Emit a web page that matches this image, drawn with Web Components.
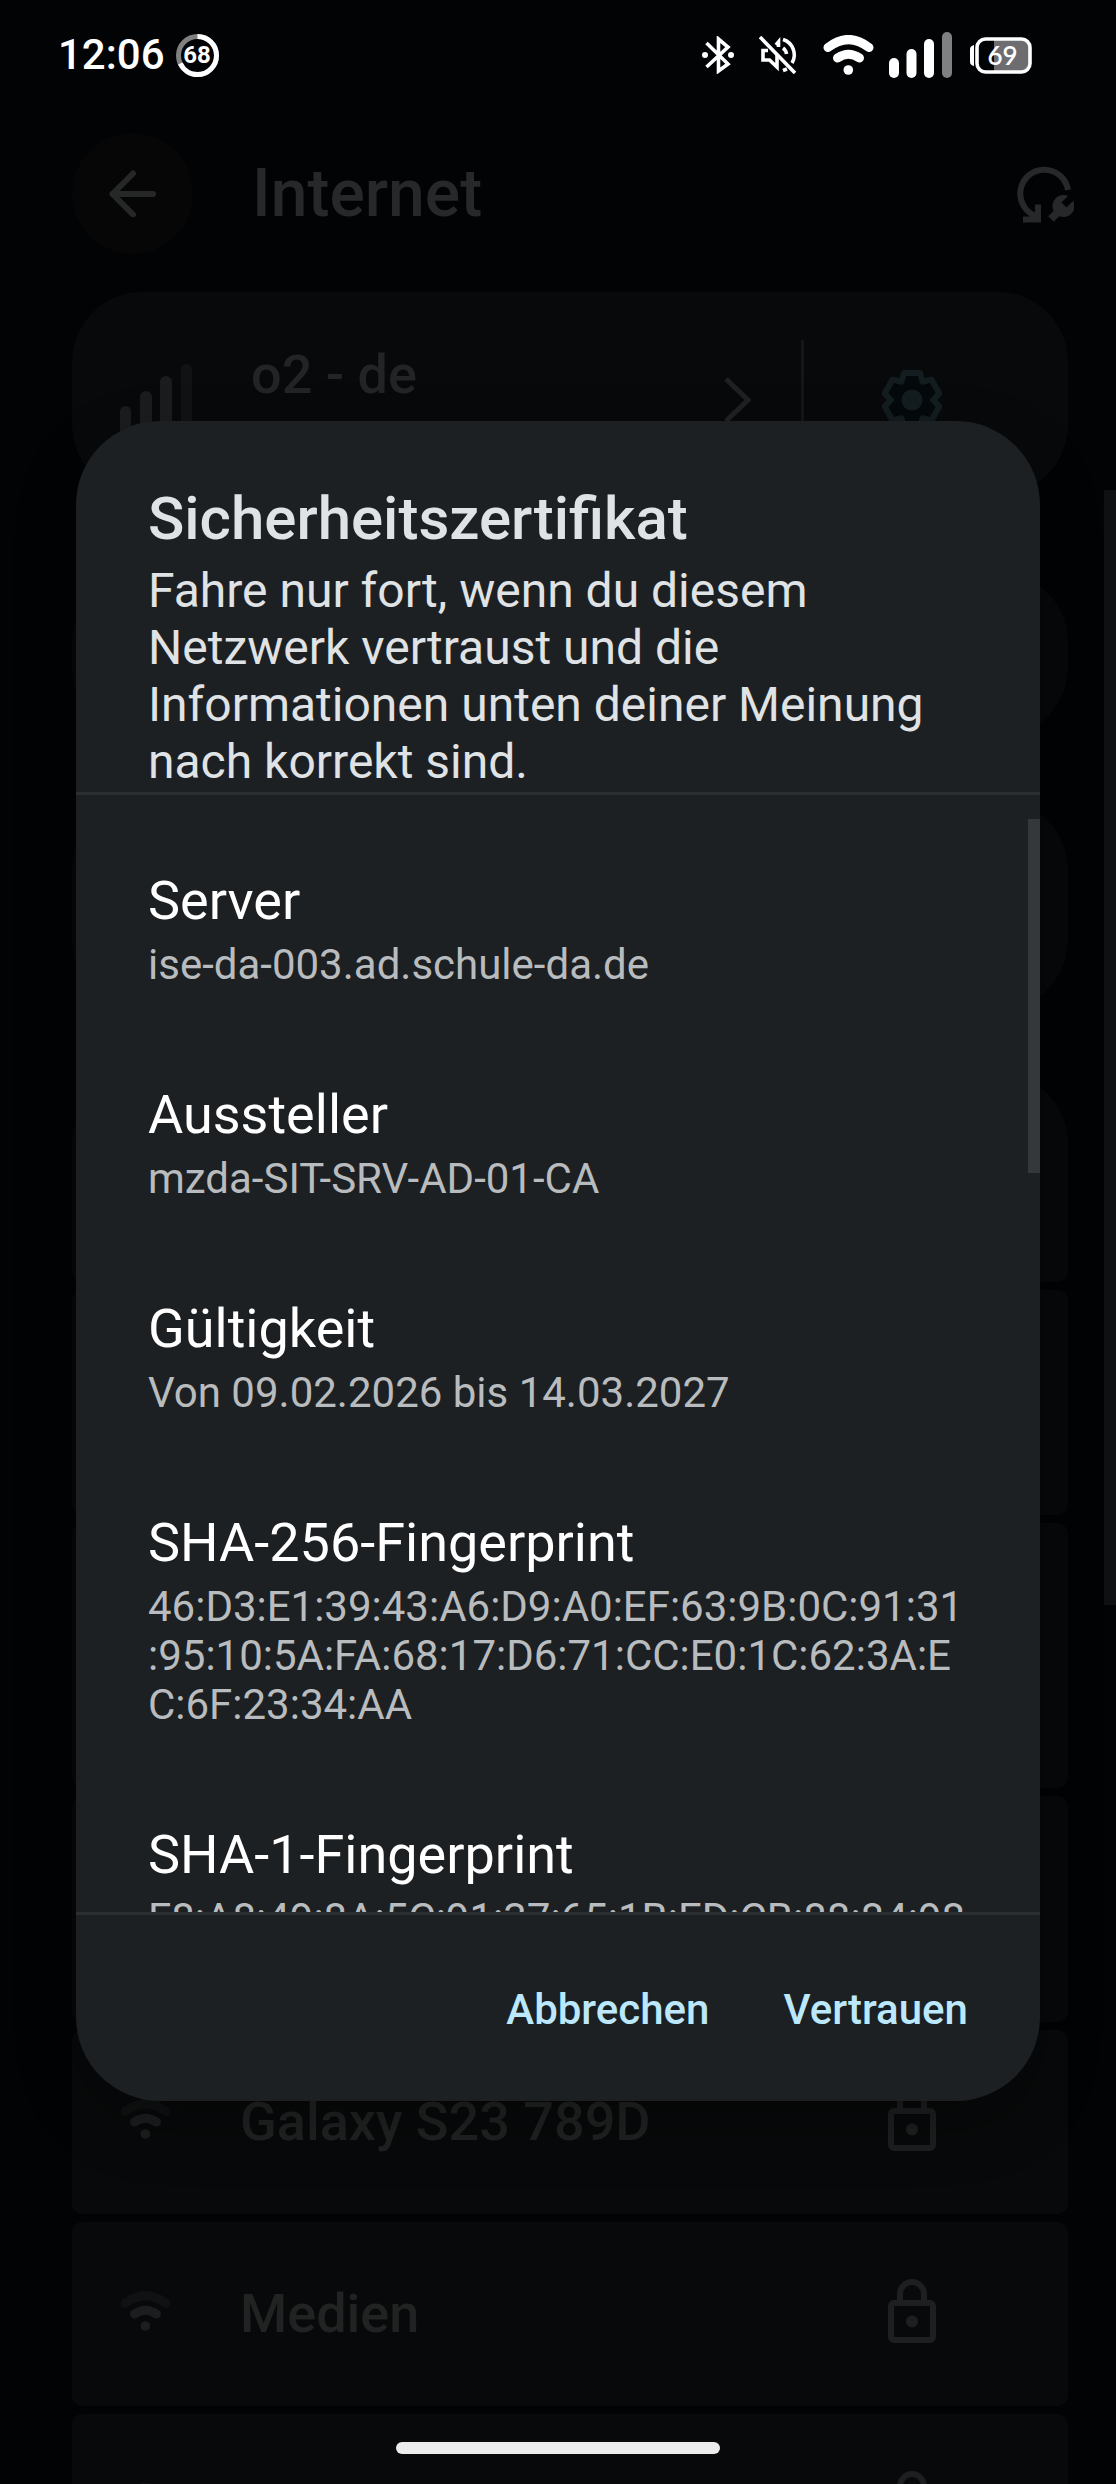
<!DOCTYPE html>
<html lang="de">
<head>
<meta charset="utf-8">
<meta name="viewport" content="width=device-width, initial-scale=1">
<title>Internet</title>
<style>
  html, body { margin: 0; height: 100%; background: #020305; }
  body { font-family: Roboto, "Noto Sans", sans-serif; color: #fff; overflow: hidden; }
</style>
</head>
<body>
<phone-screen>
  <status-bar slot="status" time="12:06" ring="68" battery="69"></status-bar>
  <settings-page heading="Internet">
    <carrier-card name="o2 - de"></carrier-card>
    <list-group style="--h:165px"><list-card></list-card></list-group>
    <list-group style="--h:210px"><list-card></list-card></list-group>
    <list-group>
      <list-card style="--h:209px"></list-card>
      <list-card style="--h:225px"></list-card>
      <list-card style="--h:265px"></list-card>
      <list-card style="--h:226px"></list-card>
      <wifi-row>Galaxy S23 789D</wifi-row>
      <wifi-row>Medien</wifi-row>
      <wifi-row></wifi-row>
    </list-group>
  </settings-page>
  <cert-dialog slot="dialog">
    <span slot="title">Sicherheitszertifikat</span>
    <span slot="text">Fahre nur fort, wenn du diesem Netzwerk vertraust und die Informationen unten deiner Meinung nach korrekt sind.</span>
    <cert-field label="Server">ise-da-003.ad.schule-da.de</cert-field>
    <cert-field label="Aussteller">mzda-SIT-SRV-AD-01-CA</cert-field>
    <cert-field label="Gültigkeit">Von 09.02.2026 bis 14.03.2027</cert-field>
    <cert-field label="SHA-256-Fingerprint">46:D3:E1:39:43:A6:D9:A0:EF:63:9B:0C:91:31:95:10:5A:FA:68:17:D6:71:CC:E0:1C:62:3A:EC:6F:23:34:AA</cert-field>
    <cert-field label="SHA-1-Fingerprint">F8:A8:49:8A:5C:91:37:65:1B:ED:CB:88:84:98</cert-field>
    <text-button slot="actions">Abbrechen</text-button>
    <text-button slot="actions">Vertrauen</text-button>
  </cert-dialog>
</phone-screen>

<script>
function define(name, html) {
  const template = document.createElement('template');
  template.innerHTML = html;
  customElements.define(name, class extends HTMLElement {
    constructor() {
      super();
      this.attachShadow({ mode: 'open' }).append(template.content.cloneNode(true));
    }
    connectedCallback() {
      for (const el of this.shadowRoot.querySelectorAll('[data-attr]'))
        el.textContent = this.getAttribute(el.dataset.attr) || '';
    }
  });
}

define('phone-screen', `
<style>
  :host { display: block; position: relative; height: 100vh; overflow: hidden; background: #020305; }
  .status { position: absolute; inset: 0 0 auto 0; }
  .overlay { position: absolute; inset: 0; display: flex; align-items: center; box-sizing: border-box; padding: 111px 76px 73px; }
  .overlay ::slotted(*) { flex: 1; }
  .nav { position: absolute; inset: auto 0 30px 0; display: flex; justify-content: center; }
  .nav span { width: 324px; height: 12px; border-radius: 6px; background: #ececec; }
  .bar { position: absolute; right: 0; top: 490px; width: 12px; height: 1115px; background: #0f1011; }
</style>
<slot></slot><div class="bar"></div>
<div class="overlay"><slot name="dialog"></slot></div>
<div class="status"><slot name="status"></slot></div>
<div class="nav"><span></span></div>`);

define('wifi-icon', `
<style>:host { display: block; } svg { display: block; }</style>
<svg width="51" height="40" viewBox="0 0 51 40" fill="none" stroke-linecap="round">
  <path d="M5 12.500Q25.500-3.500 46 12.500" stroke="var(--outer, #fff)" stroke-width="9"/>
  <path d="M14.500 23Q25.500 15.500 36.500 23" stroke="var(--inner, #fff)" stroke-width="9"/>
  <circle cx="25.300" cy="35" r="4.800" fill="var(--inner, #fff)"/>
</svg>`);

define('status-bar', `
<style>
  :host { display: flex; align-items: center; height: 110px; padding: 0 84px 0 58px; gap: 11px; color: #fff; }
  svg { display: block; flex: none; }
  .time { font-size: 42px; font-weight: 500; line-height: 50px; }
  .icons { display: flex; align-items: center; gap: 15px; margin-left: auto; }
  .ring, .batt { display: grid; place-items: center; }
  .ring > *, .batt > * { grid-area: 1 / 1; }
  .ring span { font-size: 24px; font-weight: 700; line-height: 28px; }
  .batt span { font: 600 26px/32px Lato, sans-serif; padding-left: 6px; }
</style>
<span class="time" data-attr="time"></span>
<div class="ring">
  <svg width="43" height="43" viewBox="0 0 43 43" fill="none" stroke-width="5">
    <circle cx="21.500" cy="21.500" r="19" stroke="#808080"/>
    <circle cx="21.500" cy="21.500" r="19" stroke="#fff" pathLength="100" stroke-dasharray="68 32" transform="rotate(-90 21.500 21.500)"/>
  </svg>
  <span data-attr="ring"></span>
</div>
<div class="icons">
<svg width="42" height="38" viewBox="0 0 42 38" fill="none" stroke="#fff" stroke-width="3.600">
  <path d="M4.500 7L26 28L16.500 35V3L26 11L4.500 31"/>
  <circle cx="3" cy="19" r="3" fill="#fff" stroke="none"/><circle cx="29" cy="19" r="3" fill="#fff" stroke="none"/>
</svg>
<svg width="49" height="38" viewBox="0 0 49 38" fill="none" stroke="#fff" stroke-width="3.600">
  <path d="M1 1L36 37"/>
  <path d="M9 14.500H4V24H10.500L18 31V19"/>
  <path d="M17 9L19.500 6V11" />
  <path d="M24 3.500A16 16 0 0 1 33 27M24 12A9 9 0 0 1 27.500 18M24 34.500L28 33"/>
</svg>
<wifi-icon></wifi-icon>
<svg width="63" height="46" viewBox="0 0 63 46" fill="#fff">
  <rect y="26" width="10" height="20" rx="5"/><rect x="17.500" y="17" width="10" height="29" rx="5"/>
  <rect x="35" y="7" width="10" height="39" rx="5"/><rect x="53" width="10" height="46" rx="5" fill="#808080"/>
</svg>
<div class="batt">
  <svg width="65" height="37" viewBox="0 0 65 37">
    <path d="M27 3H55a7 7 0 0 1 7 7V27a7 7 0 0 1-7 7H27Z" fill="#6d6d71"/>
    <rect x="10" y="2" width="53" height="33" rx="8.500" fill="none" stroke="#fff" stroke-width="3.600"/>
    <path d="M7 8V29Q3 28 3 25V12Q3 9 7 8Z" fill="#fff"/>
  </svg>
  <span data-attr="battery"></span>
</div>
</div>`);

define('settings-page', `
<style>
  :host { display: block; padding: 132px 48px 0 72px; }
  header { display: flex; align-items: center; height: 123px; margin: 0 -6px 37px 0; }
  .body { display: flex; flex-direction: column; }
  button { border: 0; padding: 0; background: none; display: grid; place-items: center; }
  .back { width: 121px; height: 121px; border-radius: 50%; background: #060606; }
  h1 { flex: 1; margin: 0 0 0 59px; font-size: 66px; font-weight: 500; line-height: 80px; color: #272829; }
</style>
<header>
  <button class="back" aria-label="Zurück"><svg width="47" height="47" viewBox="0 0 47 47" fill="none" stroke="#262727" stroke-width="6" stroke-linecap="round" stroke-linejoin="round"><path d="M24 3.500L3.500 24L24 44.500M3.500 24H44"/></svg></button>
  <h1 data-attr="heading"></h1>
  <button aria-label="Zurücksetzen"><svg width="57" height="58" viewBox="0 0 57 58" fill="none" stroke="#272829" stroke-width="6">
    <path d="M51 25A24 24 0 1 0 20 51.500M6 54.500H21V39.500"/>
    <path d="M44 44L34 54" stroke-width="8"/><circle cx="46.500" cy="41" r="11" fill="#272829" stroke="none"/>
    <path d="M47 40L60 27" stroke="#020305" stroke-width="7"/>
  </svg></button>
</header>
<div class="body"><slot></slot></div>`);

define('carrier-card', `
<style>
  :host { display: flex; align-items: flex-start; box-sizing: border-box; height: 203px; margin-bottom: 77px; border-radius: 70px; background: #08090a; padding: 48px 126px 48px 48px; }
  svg { display: block; flex: none; }
  .name { flex: 1; padding: 3px 0 0 59px; font-size: 54px; font-weight: 500; line-height: 63px; color: #232425; }
  .bars { margin-top: 24px; }
  .end { display: flex; align-items: center; height: 120px; }
  .line { width: 3px; height: 120px; margin: 0 78px 0 49px; background: #151617; }
  button { border: 0; background: none; padding: 0; }
</style>
<svg class="bars" width="72" height="72" viewBox="0 0 72 72" fill="#1b1c1d">
  <rect y="42" width="11" height="30" rx="5.500"/><rect x="20" y="27" width="12" height="45" rx="6"/>
  <rect x="40" y="12" width="12" height="60" rx="6"/><rect x="61" width="11" height="72" rx="5.500" fill="#111213"/>
</svg>
<span class="name" data-attr="name"></span>
<div class="end">
  <svg width="28" height="48" viewBox="0 0 28 48" fill="none" stroke="#202122" stroke-width="5"><path d="M2 3L24 24L2 45"/></svg>
  <span class="line"></span>
  <button aria-label="Einstellungen"><svg width="60" height="62" viewBox="-30 -31 60 62"><path d="M-8-27L8-27L10.500-18.200L19.400-20.400L27.400-6.600L21 0L27.400 6.600L19.400 20.400L10.500 18.200L8 27L-8 27L-10.500 18.200L-19.400 20.400L-27.400 6.600L-21 0L-27.400-6.600L-19.400-20.400L-10.500-18.200Z" fill="#04090c" stroke="#131c1f" stroke-width="6" stroke-linejoin="round"/><circle r="10.500" fill="#131c1f"/></svg></button>
</div>`);

define('list-group', `
<style>
  :host { display: flex; flex-direction: column; gap: 8px; margin-bottom: 63px; border-radius: 70px; overflow: hidden; }
</style><slot></slot>`);

define('list-card', `
<style>:host { display: block; height: var(--h, 184px); border-radius: 10px; background: #070809; }</style>`);

define('wifi-row', `
<style>
  :host { display: flex; align-items: center; box-sizing: border-box; height: 184px; padding: 0 132px 6px 48px; border-radius: 10px; background: #08090a; }
  wifi-icon { --outer: #101112; --inner: #1c1d1e; }
  .name { flex: 1; padding: 6px 0 0 69px; font-size: 54px; font-weight: 500; line-height: 66px; color: #212222; }
  svg { display: block; }
</style>
<wifi-icon></wifi-icon><span class="name"><slot></slot></span>
<svg width="48" height="64" viewBox="0 0 48 64" fill="none" stroke="#1e1f20" stroke-width="6">
  <rect x="3" y="24" width="42" height="37" rx="3"/><path d="M12 24V15a12 12 0 0 1 24 0V24"/>
  <circle cx="24" cy="42.500" r="6" fill="#1e1f20" stroke="none"/>
</svg>`);

define('cert-dialog', `
<style>
  :host { display: block; }
  section { border-radius: 84px; background: #1d2022; overflow: hidden; box-shadow: 0 24px 60px rgba(0, 0, 0, .3); }
  header { padding: 63px 72px 2px; color: #e0e3e6; border-bottom: 3px solid #2b2e30; }
  h2 { margin: 0 0 8px; font-size: 60px; font-weight: 500; line-height: 70px; }
  p { margin: 0; font-size: 48px; line-height: 57px; }
  .list { position: relative; box-sizing: border-box; height: calc(100vh - 1367px); padding: 27px 72px 0; overflow: hidden; }
  .thumb { position: absolute; top: 24px; right: 0; width: 12px; height: 354px; background: #34383a; }
  footer { display: flex; justify-content: flex-end; gap: 74px; padding: 70px 72px 66px; border-top: 3px solid #2b2e30; }
</style>
<section role="dialog" aria-modal="true">
  <header><h2><slot name="title"></slot></h2><p><slot name="text"></slot></p></header>
  <div class="list"><slot></slot><div class="thumb"></div></div>
  <footer><slot name="actions"></slot></footer>
</section>`);

define('cert-field', `
<style>
  :host { display: flex; flex-direction: column; gap: 7px; padding: 47px 0; }
  .label { font-size: 54px; line-height: 64px; color: #fff; }
  .value { font-size: 42px; line-height: 49px; color: #b9bcbe; line-break: anywhere; }
</style>
<span class="label" data-attr="label"></span><span class="value"><slot></slot></span>`);

define('text-button', `
<style>
  :host { display: block; }
  button { display: block; border: 0; padding: 0; background: none; color: #bce8fd; font-family: inherit; font-size: 42px; font-weight: 500; line-height: 50px; }
</style>
<button><slot></slot></button>`);
</script>
</body>
</html>
